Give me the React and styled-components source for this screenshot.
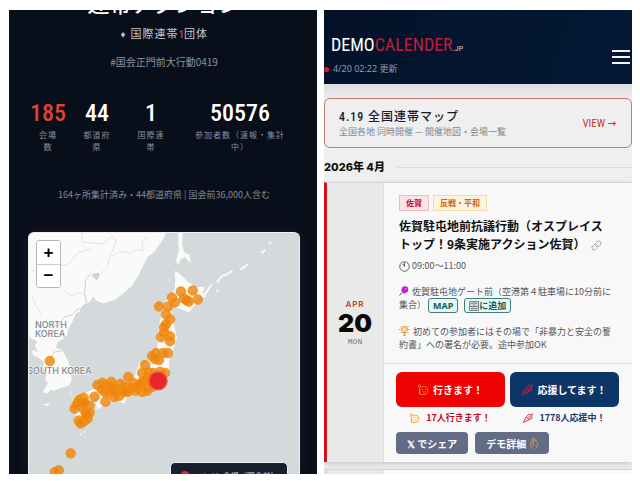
import React from 'react'
import styled, { createGlobalStyle } from 'styled-components'
import { Link as LinkIcon } from 'lucide-react'

const GlobalStyle = createGlobalStyle`
  * {
    box-sizing: border-box;
    margin: 0;
    padding: 0;
  }
  body {
    background: #fff;
    font-family: 'Noto Sans CJK JP', sans-serif;
  }
  button {
    font-family: inherit;
    border: none;
    cursor: pointer;
  }
  a {
    text-decoration: none;
    color: inherit;
  }
  svg {
    display: block;
    flex-shrink: 0;
  }
`

const narrow = `'Liberation Sans Narrow', 'Roboto Condensed', 'DejaVu Sans Condensed', sans-serif`

const Page = styled.div`
  display: grid;
  grid-template-columns: 1fr 1fr;
  gap: 7px;
  height: 100vh;
  padding: 10px 8px 7px 9px;
`

const Hero = styled.section`
  display: flex;
  flex-direction: column;
  overflow: hidden;
  background: #090e1b;
  padding: 0 17px 0 19px;
  text-align: center;
`

const HeroTitle = styled.h1`
  display: flex;
  align-items: flex-end;
  justify-content: center;
  height: 8px;
  flex-shrink: 0;
  color: #fff;
  font-size: 22px;
  font-weight: 500;
  line-height: 32px;
`

const HeroSub = styled.p`
  margin-top: 5px;
  color: #c3c7d0;
  font-size: 11px;
  line-height: 20px;
  letter-spacing: 1px;

  small {
    font-size: 6px;
    vertical-align: 1px;
  }
  em {
    color: #d8283c;
    font-style: normal;
    font-weight: 700;
    font-family: ${narrow};
    letter-spacing: 0;
  }
`

const HashTag = styled.p`
  margin-top: 7px;
  color: #8d929f;
  font-size: 10px;
  line-height: 20px;
`

const Stats = styled.dl`
  display: flex;
  justify-content: center;
  gap: 24px;
  margin-top: 25px;
`

const Stat = styled.div`
  display: flex;
  flex-direction: column;
  align-items: center;
  width: ${({ $wide }) => $wide}px;

  dd {
    order: 0;
    color: ${({ $accent }) => ($accent ? '#db4437' : '#fff')};
    font-family: ${narrow};
    font-size: 24px;
    font-weight: 500;
    line-height: 32px;
  }
  dt {
    order: 1;
    color: #8a8f9c;
    font-size: 8px;
    line-height: 12px;
    letter-spacing: 1px;
  }
`

const Note = styled.p`
  margin-top: 32px;
  color: #858a97;
  font-size: 9px;
  line-height: 20px;
`

const MapBox = styled.div`
  position: relative;
  flex: 1;
  margin-top: 27px;
  overflow: hidden;
  border: 1px solid #eceef0;
  border-bottom: none;
  border-radius: 6px 6px 0 0;
  background: #d4dadc;
  box-shadow: 0 0 12px #20182a;
`

const MapSvg = styled.svg`
  width: 100%;
`

const Zoom = styled.div`
  position: absolute;
  top: 7px;
  left: 7px;
  display: flex;
  flex-direction: column;
  border: 1px solid #b4b6b8;
  border-radius: 3px;
  overflow: hidden;

  button {
    width: 23px;
    height: 23px;
    background: #fff;
    color: #000;
    font: bold 17px/22px 'Liberation Sans', sans-serif;
  }
  button + button {
    border-top: 1px solid #ccc;
  }
`

const Legend = styled.div`
  position: absolute;
  right: 11px;
  bottom: -12px;
  display: flex;
  align-items: center;
  gap: 10px;
  width: 118px;
  height: 24px;
  padding: 2px 10px 0;
  border: 1px solid #eef0f2;
  border-radius: 5px;
  background: #182030;
  color: #c9cdd6;
  font-size: 8px;

  i {
    width: 8px;
    height: 8px;
    border-radius: 50%;
    background: #e8262b;
  }
`

const Calendar = styled.section`
  display: flex;
  flex-direction: column;
  overflow: hidden;
  background: linear-gradient(#dedee2 74px, #efeff0 92px);
`

const TopBar = styled.header`
  display: flex;
  align-items: center;
  justify-content: space-between;
  flex-shrink: 0;
  height: 74px;
  padding: 20px 2px 0 0;
  background: linear-gradient(110deg, #031227, #041836);
`

const Logo = styled.a`
  display: flex;
  align-items: baseline;
  padding-left: 7px;
  color: #fff;
  font-family: ${narrow};
  font-size: 18px;
  line-height: 20px;

  span {
    color: #bd1e3e;
  }
  small {
    color: #c9ced8;
    font-size: 8px;
  }
`

const Updated = styled.p`
  display: flex;
  align-items: center;
  gap: 4px;
  color: #8f9bb0;
  font-family: 'Noto Sans', 'Noto Sans CJK JP', sans-serif;
  font-size: 9px;
  line-height: 20px;

  i {
    width: 5px;
    height: 5px;
    border-radius: 50%;
    background: #e8142a;
  }
`

const Burger = styled.button`
  display: flex;
  flex-direction: column;
  gap: 4px;
  background: transparent;

  i {
    width: 18px;
    height: 2px;
    background: #f2f4f8;
  }
`

const Banner = styled.a`
  display: flex;
  align-items: center;
  justify-content: space-between;
  flex-shrink: 0;
  height: 50px;
  margin-top: 14px;
  padding: 0 15px 0 14px;
  border: 1px solid #c37a70;
  border-radius: 6px;

  strong {
    display: block;
    color: #1a1a2e;
    font-size: 12px;
    font-weight: 500;
    line-height: 16px;
    letter-spacing: 1px;
  }
  strong span {
    font-family: ${narrow};
  }
  small {
    display: block;
    color: #85868a;
    font-size: 9px;
    line-height: 14px;
  }
`

const View = styled.span`
  color: #c0392b;
  font-family: ${narrow};
  font-size: 11px;
`

const Month = styled.h2`
  display: flex;
  align-items: center;
  gap: 12px;
  margin-top: 9px;
  color: #111;
  font-family: Inter, 'Noto Sans CJK JP', sans-serif;
  font-size: 11px;
  font-weight: 800;
  line-height: 20px;

  &:after {
    content: '';
    flex: 1;
    height: 1px;
    background: #dcdcde;
  }
`

const EventCard = styled.article`
  display: grid;
  grid-template-columns: 57px 1fr;
  flex-shrink: 0;
  margin-top: ${({ $plain }) => ($plain ? '7px' : '5px')};
  border-left: 3px solid ${({ $plain }) => ($plain ? '#ddd' : '#d4121a')};
  border-top: 1px solid #d6d6d8;
  background: #f8f8f9;
  box-shadow: 0 2px 5px #c8c8cc;
`

const DateCol = styled.div`
  display: flex;
  flex-direction: column;
  align-items: center;
  justify-content: center;
  border-right: 1px solid #dedee0;
  background: #e9e9ea;
  font-family: Inter, sans-serif;
`

const MonthName = styled.span`
  color: #c0392b;
  font-size: 8px;
  font-weight: 600;
  line-height: 10px;
  letter-spacing: 1px;
`

const Day = styled.span`
  color: #0a0a0a;
  font-size: 25px;
  font-weight: 900;
  line-height: 28px;
`

const WeekDay = styled.span`
  color: #777;
  font-family: 'Liberation Mono', monospace;
  font-size: 8px;
  line-height: 10px;
`

const Info = styled.div`
  padding: 12px 18px 12px 15px;
  border-bottom: 1px solid #dcdcde;
`

const Tags = styled.div`
  display: flex;
  gap: 4px;
`

const Tag = styled.span`
  padding: 0 6px;
  border: 1px solid ${({ $red }) => ($red ? '#eebbc2' : '#f0dca8')};
  background: ${({ $red }) => ($red ? '#fae4e7' : '#fdf3dc')};
  color: ${({ $red }) => ($red ? '#c2102c' : '#cc6a0c')};
  font-size: 8px;
  font-weight: 700;
  line-height: 14px;
`

const EventTitle = styled.h3`
  margin-top: 6px;
  color: #111;
  font-size: 12px;
  font-weight: 700;
  line-height: 18px;

  svg {
    display: inline-block;
    margin-left: 6px;
    vertical-align: -2px;
    color: #9a9a9e;
  }
`

const Time = styled.p`
  display: flex;
  align-items: center;
  gap: 2px;
  margin-top: 6px;
  color: #555;
  font-size: 9px;
  line-height: 14px;
`

const Text = styled.p`
  margin-top: 12px;
  color: #555;
  font-size: 9px;
  line-height: 13px;

  > svg {
    display: inline-block;
    margin-right: 3px;
    vertical-align: -1px;
  }
`

const Chip = styled.a`
  display: inline-flex;
  align-items: center;
  height: 15px;
  margin-right: 6px;
  padding: 0 4px;
  border: 1px solid #3d7f78;
  border-radius: 3px;
  background: #e9f6f4;
  color: #10605a;
  font-family: 'Noto Sans', 'Noto Sans CJK JP', sans-serif;
  font-weight: 700;
  line-height: 13px;
  vertical-align: middle;
`

const Actions = styled.div`
  display: grid;
  grid-template-columns: 1fr 1fr;
  gap: 0 5px;
  padding: 8px 13px 8px 12px;
`

const Vote = styled.button`
  display: flex;
  align-items: center;
  justify-content: center;
  gap: 4px;
  height: 35px;
  border-radius: 6px;
  background: ${({ $navy }) => ($navy ? '#0d3566' : '#ee0202')};
  color: #fff;
  font-size: 10px;
  font-weight: 700;
`

const Count = styled.p`
  display: flex;
  align-items: center;
  justify-content: center;
  gap: 6px;
  color: ${({ $navy }) => ($navy ? '#1b3a68' : '#c40e1c')};
  font-size: 9px;
  font-weight: 700;
  line-height: 21px;
`

const Links = styled.div`
  display: flex;
  grid-column: 1 / -1;
  gap: 7px;
  margin-top: 4px;
`

const GreyButton = styled.a`
  display: flex;
  align-items: center;
  gap: 4px;
  height: 22px;
  padding: 0 11px;
  border-radius: 4px;
  background: #626c85;
  color: #fff;
  font-size: 10px;
  font-weight: 700;
`

const ClockIcon = () => (
  <svg width="11" height="11" viewBox="0 0 22 22" fill="none" stroke="#555" strokeWidth="1.8">
    <circle cx="11" cy="11" r="9.5" />
    <path d="M11 3v8L8 6" />
  </svg>
)

const PinIcon = () => (
  <svg width="10" height="10" viewBox="0 0 20 20">
    <path d="M8 11l-7 8" stroke="#555" strokeWidth="2" />
    <circle cx="12" cy="7" r="6.5" fill="#c51fd6" />
    <path d="M4 9l7 7 2-4-5-5z" fill="#c51fd6" />
    <circle cx="14" cy="5" r="1.6" fill="#e68bf0" />
  </svg>
)

const BulbIcon = () => (
  <svg width="11" height="11" viewBox="0 0 22 22" fill="none" stroke="#dc9420" strokeWidth="2">
    <path d="M8 15c0-2-3-3-3-6a6 6 0 0112 0c0 3-3 4-3 6z" fill="#fbdc94" />
    <path d="M8 18h6M9 21h4M0 9h3M19 9h3M3 2l2 2M19 2l-2 2M3 16l2-2M19 16l-2-2" />
  </svg>
)

const BookIcon = () => (
  <svg width="10" height="10" viewBox="0 0 20 20" fill="none" stroke="#7c8484" strokeWidth="2">
    <path d="M1 1h18v18H1z" fill="#d4d8d7" />
    <path d="M1 11h18M10 1v10M4 5h4M12 5h4M4 15h12" />
  </svg>
)

const RaiseIcon = ({ size = 11 }) => (
  <svg width={size} height={size} viewBox="0 0 22 22" fill="none" stroke="#f09a1c" strokeWidth="1.8">
    <path d="M3 21V9L1 3l2-2 3 6c3-3 11-3 13 2 2 6-1 12-7 12H6c-2-2-3-6-2-9" />
    <path d="M9 10v2M15 10v2M9 15c2 2 4 2 6 0" />
  </svg>
)

const CheerIcon = ({ size = 11 }) => (
  <svg width={size} height={size} viewBox="0 0 22 22" fill="none" stroke="#cf2338" strokeWidth="1.8">
    <path d="M1 21L6 9c2-2 9 3 8 6z" />
    <path d="M5 13l4 4M8 9l5 5M9 7l4-5 3 2 5-2-2 6 1 4-6 2M12 9l4-4M14 11l4-3" />
  </svg>
)

const HandIcon = () => (
  <svg width="8" height="12" viewBox="0 0 16 24" fill="none" stroke="#e39a2c" strokeWidth="2">
    <path d="M5 23c-5-5-5-8-3-11l4-9 2-1 1 2-3 9 1 5M11 23c4-4 5-8 3-12l-4-6" />
  </svg>
)

// x, y of each venue on the map
const venues = [
  [181, 291], [193, 290], [198, 299], [184, 298], [189, 301], [187, 300], [172, 297], [175, 302],
  [168, 306], [159, 306], [166, 314], [170, 319], [166, 324], [164, 327], [164, 332],
  [161, 337], [170, 336], [170, 341], [168, 353], [163, 353], [156, 353], [152, 356],
  [159, 360], [155, 359], [145, 365], [49, 361], [142, 373], [148, 372], [153, 373], [160, 372],
  [165, 373], [150, 378], [145, 380], [128, 377], [111, 382], [97, 385], [102, 383], [106, 385],
  [120, 384], [115, 388], [104, 392], [94, 397], [105, 402], [125, 387], [130, 388], [133, 383],
  [137, 388], [142, 382], [142, 392], [147, 387], [119, 396], [114, 397], [110, 387],
  [135, 391], [128, 392], [147, 391], [152, 387], [108, 393], [122, 391], [125, 392],
  [113, 392], [101, 389], [139, 385], [83, 398], [79, 400],
  [78, 402], [76, 405], [74, 409], [82, 408], [80, 403], [89, 406], [89, 413], [84, 403],
  [85, 413], [78, 421], [83, 422], [87, 419], [80, 424], [86, 416], [70, 454], [58, 471],
  [54, 473],
]

const JapanMap = () => (
  <MapSvg viewBox="28 232 272 243" role="img" aria-label="会場マップ">
    <g fill="#fafaf8">
      <path d="M28 232H166L162 240 155 250 147 257 138 275 132 285 123 293 115 299 103 303 97 301 92 296 90 301 82 305 79 311 75 313 72 321 68 328 66 336 57 342 55 347 62 351 67 360 70 368 71 380 68 386 60 388 54 391 50 390 46 394 42 392 47 383 44 379 46 374 42 367 43 362 38 358 32 355 31 350 37 352 34 346 36 341 30 338 28 336z" />
      <path d="M178 232h5l-1 12 3 8 5 2 1 8-3-2-3-4-4 3-3 5-2-4 3-11z" />
      <path d="M175 270l5 3 8 8 9 6 8-1-2 6 4 4-7 2-5 7-6 7-9-4-9-2-5 5-3-5 2-5 5-5 5-8z" />
      <path d="M163 309l9 2 2 14 3 12-3 10-5 15v10l-4 11-7 6-11 3-10 4-10 1-3 7-5-2-2-4-12 2-8-1-10 0-4-5 15-7 12-3 14 2 10-8 5-15 2 3 6-5 10-12 2-24z" />
      <path d="M74 399l10-5 9 6-1 10-4 14-10 3-4-7 2-9zM94 401l13-4 6 2-6 6-6 2-4 3z" />
      <path d="M42 405l7-2-2 3zM69 391l2 6-1-6zM64 411l2-2zM78 434l3 0-1 2zM83 431l2 1-1 2zM168 278l2 1-1 2z" />
    </g>
    <path d="M205 294l7-10M217 282l6-7 4-1 6-4M241 269l8-6M262 252l4-3M270 243l2-2M217 291l2-1" fill="none" stroke="#fafaf8" strokeWidth="2" />
    <path d="M92 273l6-1 1 3-3 5-2-3-2-1z" fill="#cdd3d5" />
    <path d="M46 326l12-1 5-8 9-3 4-5 8-2 2-6-2-8 1-14 5-6M49 360l4-8 8-1" fill="none" stroke="#e6c6c6" />
    <path d="M30 271l17-5 20-2 10-12 15-4M81 232l1 9 20 2 10-8 4 6-6 13-3 12-9 10M112 255l7-4 13 1 5-4 6 2-1-10 5-4M31 296l9 18M62 290l9 5 8-3 6 3" fill="none" stroke="#eddede" />
    <g fill="#ee8210" fillOpacity=".8" stroke="#f4920c" strokeWidth="1" strokeOpacity=".9">
      {venues.map(([x, y]) => (
        <circle key={`${x}-${y}`} cx={x} cy={y} r="4.8" />
      ))}
    </g>
    <circle cx="158" cy="381" r="9" fill="#e8262b" stroke="#ee5046" strokeWidth="1.5" />
    <g fill="#7c8797" stroke="#fafaf8" strokeWidth="1" paintOrder="stroke" fontFamily="Inter, sans-serif" fontSize="9" fontWeight="500">
      <text x="34" y="328">NORTH</text>
      <text x="34" y="337">KOREA</text>
      <text x="91" y="374" textAnchor="end">SOUTH KOREA</text>
    </g>
  </MapSvg>
)

const stats = [
  { value: '185', label: '会場数', wide: 20, accent: true },
  { value: '44', label: '都道府県', wide: 30 },
  { value: '1', label: '国際連帯', wide: 30 },
  { value: '50576', label: '参加者数（速報・集計中）', wide: 100 },
]

const App = () => {
  return (
    <>
      <GlobalStyle />
      <Page>
        <Hero>
          <HeroTitle>連帯アクション</HeroTitle>
          <HeroSub><small>♦</small> 国際連帯<em>1</em>団体</HeroSub>
          <HashTag>#国会正門前大行動0419</HashTag>
          <Stats>
            {stats.map((s) => (
              <Stat key={s.label} $wide={s.wide} $accent={s.accent}>
                <dt>{s.label}</dt>
                <dd>{s.value}</dd>
              </Stat>
            ))}
          </Stats>
          <Note>164ヶ所集計済み・44都道府県 | 国会前36,000人含む</Note>
          <MapBox>
            <JapanMap />
            <Zoom>
              <button aria-label="拡大">+</button>
              <button aria-label="縮小">−</button>
            </Zoom>
            <Legend><i />メイン会場（国会前）</Legend>
          </MapBox>
        </Hero>

        <Calendar>
          <TopBar>
            <div>
              <Logo href="#">DEMO<span>CALENDER</span><small>.JP</small></Logo>
              <Updated><i />4/20 02:22 更新</Updated>
            </div>
            <Burger aria-label="メニュー"><i /><i /><i /></Burger>
          </TopBar>
          <Banner href="#map">
            <div>
              <strong><span>4.19</span> 全国連帯マップ</strong>
              <small>全国各地 同時開催 — 開催地図・会場一覧</small>
            </div>
            <View>VIEW →</View>
          </Banner>
          <Month>2026年 4月</Month>
          <EventCard>
            <DateCol>
              <MonthName>APR</MonthName>
              <Day>20</Day>
              <WeekDay>MON</WeekDay>
            </DateCol>
            <div>
              <Info>
                <Tags>
                  <Tag $red>佐賀</Tag>
                  <Tag>反戦・平和</Tag>
                </Tags>
                <EventTitle>
                  佐賀駐屯地前抗議行動（オスプレイストップ！9条実施アクション佐賀）
                  <LinkIcon size={11} />
                </EventTitle>
                <Time><ClockIcon />09:00〜11:00</Time>
                <Text>
                  <PinIcon />佐賀駐屯地ゲート前（空港第４駐車場に10分前に集合）{' '}
                  <Chip href="#map">MAP</Chip>
                  <Chip href="#add"><BookIcon />に追加</Chip>
                </Text>
                <Text>
                  <BulbIcon />初めての参加者にはその場で「非暴力と安全の誓約書」への署名が必要。途中参加OK
                </Text>
              </Info>
              <Actions>
                <Vote><RaiseIcon />行きます！</Vote>
                <Vote $navy><CheerIcon />応援してます！</Vote>
                <Count><RaiseIcon size={10} />17人行きます！</Count>
                <Count $navy><CheerIcon size={10} />1778人応援中！</Count>
                <Links>
                  <GreyButton href="#share">𝕏 でシェア</GreyButton>
                  <GreyButton href="#detail">デモ詳細 <HandIcon /></GreyButton>
                </Links>
              </Actions>
            </div>
          </EventCard>
          <EventCard $plain>
            <DateCol />
            <Info />
          </EventCard>
        </Calendar>
      </Page>
    </>
  )
}

export default App
